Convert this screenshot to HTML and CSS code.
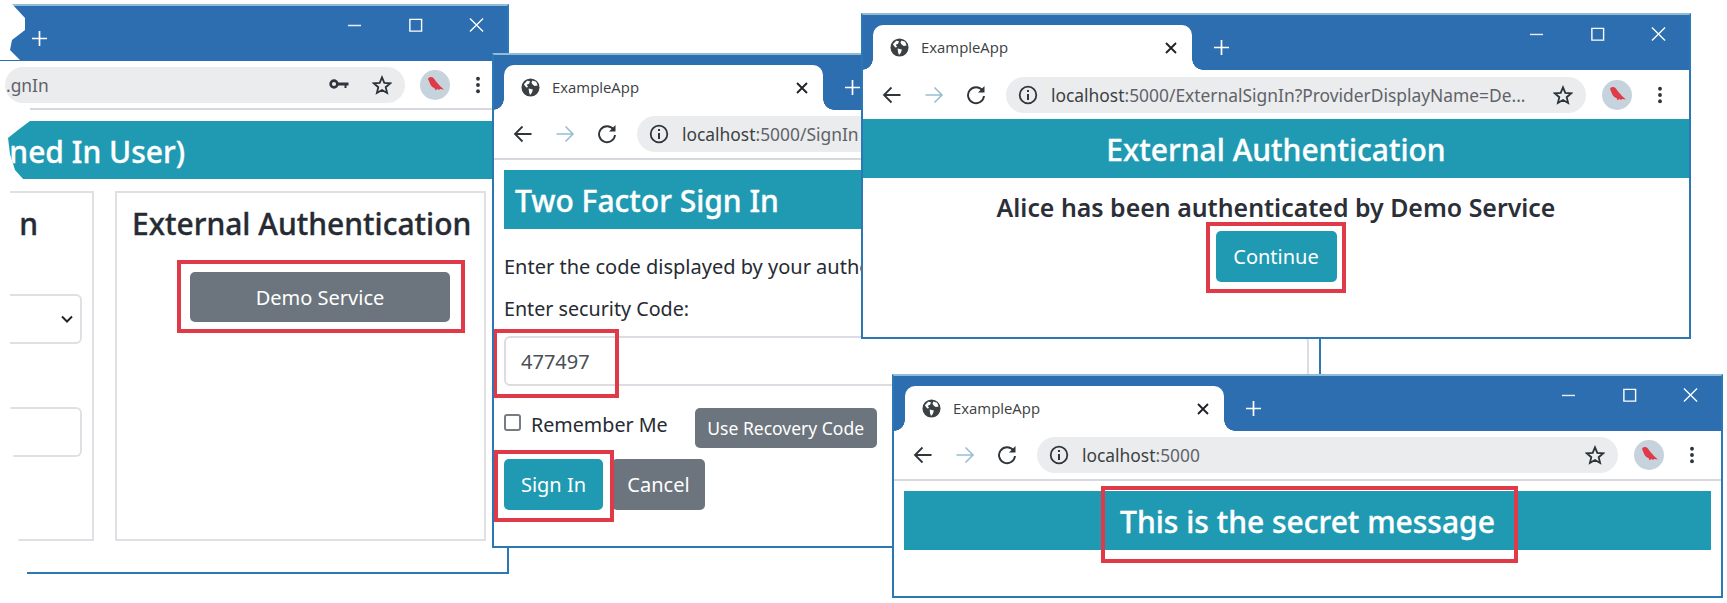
FILE: index.html
```html
<!DOCTYPE html>
<html lang="en">

<head>
    <meta charset="UTF-8" />
    <title>ExampleApp</title>
    <link rel="stylesheet" href="styles.css">
</head>

<body>
    <svg class="icons" width="0" height="0">
        <symbol id="i-globe" viewBox="0 0 20 20">
            <circle cx="10" cy="10" r="9.5" fill="#3c4043" />
            <path d="M3 6.5 6.5 3l3 .5-1 2.5-2.5 1 1.500 2.500-2 .5zM12 2.500l4 1.500 1.500 4-3 .5-2-1.500-1.500-2zM8 11l4.500 1-1 3.500-2 2.500-1-3z" fill="#fff" />
        </symbol>
        <symbol id="i-back" viewBox="0 0 20 20">
            <path d="M18.500 10H2M9.500 2.500 2 10l7.500 7.500" fill="none" stroke="currentColor" stroke-width="1.800" />
        </symbol>
        <symbol id="i-fwd" viewBox="0 0 20 20">
            <path d="M1.500 10H18M10.500 2.500 18 10l-7.500 7.500" fill="none" stroke="currentColor" stroke-width="1.600" />
        </symbol>
        <symbol id="i-reload" viewBox="0 0 20 20">
            <path d="M16.500 5.500A8 8 0 1 0 18 11" fill="none" stroke="currentColor" stroke-width="1.900" />
            <path d="M18.500 1v6.500H12z" fill="currentColor" />
        </symbol>
        <symbol id="i-info" viewBox="0 0 20 20">
            <circle cx="10" cy="10" r="8.300" fill="none" stroke="currentColor" stroke-width="1.800" />
            <path d="M9 9h2v6H9zM9 5h2v2H9z" fill="currentColor" />
        </symbol>
        <symbol id="i-star" viewBox="0 0 20 20">
            <path d="M10 2.300 12.300 7.800l6 .5-4.600 3.900 1.400 5.800L10 15l-5.100 3 1.400-5.800-4.600-3.900 6-.5z" fill="none" stroke="#2b3238" stroke-width="1.800" stroke-linejoin="miter" />
        </symbol>
        <symbol id="i-key" viewBox="0 0 20 20">
            <circle cx="5" cy="9" r="3.400" fill="none" stroke="#2f353b" stroke-width="2.600" />
            <path d="M8 7.500h11.500v3H17.500V13h-2v-2.500H8z" fill="#2f353b" />
        </symbol>
        <symbol id="i-bird" viewBox="0 0 30 30">
            <path d="M8 9c1-2.500 4-2.500 5.500-1l3 4 4 4.500 3.500 3-4-.5-1 1-1.500-1-2 1.200-1-2.200C10.500 17 10 13 8 9z" fill="#e03a49" />
        </symbol>
        <symbol id="i-dots" viewBox="0 0 24 24">
            <circle cx="12" cy="4.500" r="2.300" fill="#2f353b" />
            <circle cx="12" cy="12" r="2.300" fill="#2f353b" />
            <circle cx="12" cy="19.500" r="2.300" fill="#2f353b" />
        </symbol>
        <symbol id="i-plus" viewBox="0 0 18 18">
            <path d="M9 1v16M1 9h16" fill="none" stroke="#fff" stroke-width="1.800" />
        </symbol>
        <symbol id="i-min" viewBox="0 0 16 16">
            <path d="M1 8.500h14" fill="none" stroke="#e8eef5" stroke-width="1.500" />
        </symbol>
        <symbol id="i-max" viewBox="0 0 16 16">
            <path d="M2 2h12.500v12.500H2z" fill="none" stroke="#fff" stroke-width="1.500" />
        </symbol>
        <symbol id="i-close" viewBox="0 0 16 16">
            <path d="M1 1l14 14M15 1 1 15" fill="none" stroke="#fff" stroke-width="1.400" />
        </symbol>
        <symbol id="i-x" viewBox="0 0 12 12">
            <path d="M1 1l10 10M11 1 1 11" fill="none" stroke="#1f2327" stroke-width="1.900" />
        </symbol>
    </svg>

    <!-- janela rasgada da esquerda -->
    <div class="window win-torn">
        <div class="titlebar">
            <svg class="plus"><use href="#i-plus" /></svg>
            <div class="spacer"></div>
            <div class="controls">
                <svg><use href="#i-min" /></svg>
                <svg><use href="#i-max" /></svg>
                <svg><use href="#i-close" /></svg>
            </div>
        </div>
        <div class="toolbar toolbar-line torn-toolbar">
            <div class="pill torn-pill">
                <span class="url">.gnIn</span>
                <svg class="pill-key"><use href="#i-key" /></svg>
                <svg class="pill-star"><use href="#i-star" /></svg>
            </div>
            <svg class="avatar"><use href="#i-bird" /></svg>
            <svg class="dots"><use href="#i-dots" /></svg>
        </div>
        <div class="banner torn-banner"><h2>ned In User)</h2></div>
        <div class="cards">
            <div class="card card-left">
                <h3>n</h3>
                <div class="field field-select">
                    <svg class="chevron" viewBox="0 0 12 8"><path d="M1 1.500 6 6.500l5-5" fill="none" stroke="#212529" stroke-width="2" /></svg>
                </div>
                <div class="field field-text"></div>
            </div>
            <div class="card card-right">
                <h3>External Authentication</h3>
                <button class="btn btn-gray btn-demo">Demo Service</button>
            </div>
        </div>
        <div class="mark mark-demo"></div>
    </div>

    <!-- dois fatores -->
    <div class="window win-two">
        <div class="titlebar">
            <div class="tab">
                <svg class="globe"><use href="#i-globe" /></svg>
                <span class="tab-title">ExampleApp</span>
                <svg class="tab-x"><use href="#i-x" /></svg>
            </div>
            <svg class="plus"><use href="#i-plus" /></svg>
        </div>
        <div class="toolbar toolbar-line">
            <svg class="nav"><use href="#i-back" /></svg>
            <svg class="nav nav-off"><use href="#i-fwd" /></svg>
            <svg class="nav"><use href="#i-reload" /></svg>
            <div class="pill">
                <svg class="info"><use href="#i-info" /></svg>
                <span class="url"><b>localhost</b>:5000/SignIn</span>
            </div>
        </div>
        <div class="content">
            <div class="banner banner-left"><h2>Two Factor Sign In</h2></div>
            <p class="line first-line">Enter the code displayed by your authenticator app</p>
            <p class="line label-line">Enter security Code:</p>
            <div class="code-input">477497</div>
            <div class="remember-row">
                <span class="checkbox"></span>
                <span class="line remember-text">Remember Me</span>
                <button class="btn btn-gray btn-recovery">Use Recovery Code</button>
            </div>
            <div class="button-row">
                <button class="btn btn-teal btn-signin">Sign In</button>
                <button class="btn btn-gray btn-cancel">Cancel</button>
            </div>
        </div>
        <div class="mark mark-code"></div>
        <div class="mark mark-signin"></div>
    </div>

    <!-- autenticacao externa -->
    <div class="window win-external">
        <div class="titlebar">
            <div class="tab">
                <svg class="globe"><use href="#i-globe" /></svg>
                <span class="tab-title">ExampleApp</span>
                <svg class="tab-x"><use href="#i-x" /></svg>
            </div>
            <svg class="plus"><use href="#i-plus" /></svg>
            <div class="spacer"></div>
            <div class="controls">
                <svg><use href="#i-min" /></svg>
                <svg><use href="#i-max" /></svg>
                <svg><use href="#i-close" /></svg>
            </div>
        </div>
        <div class="toolbar">
            <svg class="nav"><use href="#i-back" /></svg>
            <svg class="nav nav-off"><use href="#i-fwd" /></svg>
            <svg class="nav"><use href="#i-reload" /></svg>
            <div class="pill">
                <svg class="info"><use href="#i-info" /></svg>
                <span class="url"><b>localhost</b>:5000/ExternalSignIn?ProviderDisplayName=De...</span>
                <svg class="pill-star"><use href="#i-star" /></svg>
            </div>
            <svg class="avatar"><use href="#i-bird" /></svg>
            <svg class="dots"><use href="#i-dots" /></svg>
        </div>
        <div class="banner"><h2>External Authentication</h2></div>
        <h4 class="auth-text">Alice has been authenticated by Demo Service</h4>
        <div class="center-row"><button class="btn btn-teal btn-continue">Continue</button></div>
        <div class="mark mark-continue"></div>
    </div>

    <!-- mensagem secreta -->
    <div class="window win-secret">
        <div class="titlebar">
            <div class="tab">
                <svg class="globe"><use href="#i-globe" /></svg>
                <span class="tab-title">ExampleApp</span>
                <svg class="tab-x"><use href="#i-x" /></svg>
            </div>
            <svg class="plus"><use href="#i-plus" /></svg>
            <div class="spacer"></div>
            <div class="controls">
                <svg><use href="#i-min" /></svg>
                <svg><use href="#i-max" /></svg>
                <svg><use href="#i-close" /></svg>
            </div>
        </div>
        <div class="toolbar toolbar-line">
            <svg class="nav"><use href="#i-back" /></svg>
            <svg class="nav nav-off"><use href="#i-fwd" /></svg>
            <svg class="nav"><use href="#i-reload" /></svg>
            <div class="pill">
                <svg class="info"><use href="#i-info" /></svg>
                <span class="url"><b>localhost</b>:5000</span>
                <svg class="pill-star"><use href="#i-star" /></svg>
            </div>
            <svg class="avatar"><use href="#i-bird" /></svg>
            <svg class="dots"><use href="#i-dots" /></svg>
        </div>
        <div class="content">
            <div class="banner"><h2>This is the secret message</h2></div>
        </div>
        <div class="mark mark-secret"></div>
    </div>
</body>

</html>
```

FILE: styles.css
```css
* {
    box-sizing: border-box;
}

body {
    margin: 0;
    width: 1727px;
    height: 603px;
    overflow: hidden;
    position: relative;
    background: #fff;
    font-family: "Noto Sans", "Open Sans", sans-serif;
    color: #262b33;
}

.icons {
    position: absolute;
}

.window {
    position: absolute;
    background: #fff;
    border: 2px solid #2b78b4;
    border-top-color: #8fbdd3;
    overflow: hidden;
}

.win-torn {
    left: 0;
    top: 4px;
    width: 509px;
    height: 570px;
    z-index: 1;
    border-left: none;
    clip-path: polygon(12px 0, 100% 0, 100% 100%, 27px 100%, 27px 545px, 19px 545px, 10px 400px, 10px 176px, 24px 176px, 15px 166px, 10px 150px, 8px 134px, 18px 126px, 30px 117px, 30px 104px, 0 104px, 0 56px, 20px 56px, 10px 46px, 12px 36px, 25px 26px, 25px 14px);
}

.win-two {
    left: 492px;
    top: 53px;
    width: 829px;
    height: 495px;
    z-index: 2;
}

.win-external {
    left: 861px;
    top: 13px;
    width: 830px;
    height: 326px;
    z-index: 3;
}

.win-secret {
    left: 892px;
    top: 374px;
    width: 831px;
    height: 224px;
    z-index: 4;
}

.titlebar {
    display: flex;
    height: 55px;
    background: #2d6eb0;
}

.win-torn .titlebar {
    padding-left: 10px;
}

.tab {
    position: relative;
    display: flex;
    align-items: center;
    align-self: flex-end;
    width: 319px;
    height: 45px;
    margin-left: 10px;
    padding: 0 15px 0 17px;
    background: #fff;
    border-radius: 10px 10px 0 0;
}

.win-secret .tab {
    margin-left: 11px;
}

.tab::before,
.tab::after {
    content: "";
    position: absolute;
    bottom: 0;
    width: 11px;
    height: 11px;
}

.tab::before {
    left: -11px;
    background: radial-gradient(circle at 0 0, #2d6eb0 10.500px, #fff 11px);
}

.tab::after {
    right: -11px;
    background: radial-gradient(circle at 100% 0, #2d6eb0 10.500px, #fff 11px);
}

.globe {
    width: 19px;
    height: 19px;
    flex: none;
}

.tab-title {
    flex: 1;
    margin-left: 12px;
    padding-bottom: 2px;
    font-size: 14.900px;
    color: #3c4043;
    font-family: "Open Sans", sans-serif;
}

.tab-x {
    width: 12px;
    height: 12px;
}

.plus {
    width: 17px;
    height: 17px;
    align-self: flex-end;
    margin: 0 0 14px 21px;
    flex: none;
}

.spacer {
    flex: 1;
}

.controls {
    display: flex;
    height: 38px;
}

.controls svg {
    width: 61px;
    height: 38px;
    padding: 11px 23px;
}

.toolbar {
    display: flex;
    align-items: center;
    height: 50px;
    padding: 0 17px 0 17px;
    background: #fff;
}

.win-external .toolbar,
.win-torn .toolbar {
    height: 49px;
}

.toolbar-line {
    border-bottom: 2px solid #d6d8de;
}

.nav {
    width: 24px;
    height: 24px;
    padding: 2px;
    margin-right: 18px;
    color: #2f353b;
    flex: none;
}

.nav-off {
    color: #97bfd2;
}

.pill {
    flex: 1;
    min-width: 0;
    display: flex;
    align-items: center;
    height: 36px;
    padding: 0 13px 0 12px;
    background: #ebecee;
    border-radius: 18px;
    overflow: hidden;
}

.info {
    width: 20px;
    height: 20px;
    margin-right: 13px;
    color: #2f353b;
    flex: none;
}

.url {
    flex: 1;
    font-size: 17.400px;
    color: #5f6368;
    white-space: nowrap;
}

.url b {
    font-weight: 400;
    color: #3c4043;
}

.pill-star {
    width: 20px;
    height: 20px;
    flex: none;
}

.pill-key {
    width: 20px;
    height: 20px;
    margin-right: 23px;
    flex: none;
}

.avatar {
    width: 30px;
    height: 30px;
    margin-left: 16px;
    border-radius: 50%;
    background: #c6d3dc;
    flex: none;
}

.dots {
    width: 24px;
    height: 24px;
    padding: 2px;
    margin-left: 16px;
    flex: none;
}

.torn-toolbar {
    padding: 0 17px 0 5px;
}

.torn-pill {
    flex: none;
    width: 400px;
    padding: 0 13px 0 1px;
}

.torn-pill + .avatar {
    margin-left: 15px;
}

.banner {
    display: flex;
    align-items: center;
    justify-content: center;
    height: 59px;
    padding-top: 2px;
    background: #1f9ab2;
    color: #fff;
}

.banner h2 {
    margin: 0;
    font-size: 30px;
    font-weight: 500;
    -webkit-text-stroke: 0.35px currentColor;
    white-space: nowrap;
}

.banner-left {
    justify-content: flex-start;
    padding-left: 11px;
}

.torn-banner {
    justify-content: flex-end;
    height: 58px;
    margin-top: 11px;
    padding-right: 322px;
}

.cards {
    display: flex;
    justify-content: flex-end;
    gap: 21px;
    margin-top: 12px;
    padding-right: 21px;
}

.card {
    height: 350px;
    border: 2px solid #dfe0e4;
    flex: none;
}

.card h3 {
    margin: 0;
    font-size: 30px;
    font-weight: 500;
    -webkit-text-stroke: 0.35px currentColor;
    line-height: 40px;
    white-space: nowrap;
}

.card-left {
    width: 86px;
    display: flex;
    flex-direction: column;
    align-items: flex-end;
    padding-top: 11px;
    border-left: none;
}

.card-left h3 {
    margin-right: 54px;
}

.field {
    height: 50px;
    border: 2px solid #dfe0e4;
    border-left: none;
    border-radius: 0 6px 6px 0;
    flex: none;
}

.card-left .field {
    width: 74px;
    margin-right: 10px;
}

.field-select {
    display: flex;
    align-items: center;
    justify-content: flex-end;
    margin-top: 50px;
    padding-right: 7px;
}

.field-text {
    margin-top: 63px;
}

.chevron {
    width: 12px;
    height: 8px;
}

.card-right {
    width: 371px;
    padding: 11px 0 0 15px;
}

.btn {
    display: block;
    border: none;
    border-radius: 5px;
    color: #fff;
    font-family: inherit;
    font-size: 20px;
    padding: 0;
}

.btn-gray {
    background: #6c757d;
}

.btn-teal {
    background: #1f9ab2;
}

.btn-demo {
    width: 260px;
    height: 50px;
    margin: 28px 0 0 58px;
}

.content {
    padding: 10px 10px 0;
}

.line {
    margin: 0;
    font-size: 19.700px;
    line-height: 26px;
    white-space: nowrap;
}

.first-line {
    margin-top: 25px;
    font-size: 20px;
}

.label-line {
    margin-top: 16px;
}

.code-input {
    display: flex;
    align-items: center;
    height: 50px;
    margin-top: 14px;
    padding-left: 15px;
    border: 2px solid #dcdde2;
    border-radius: 6px;
    font-size: 20px;
    color: #495057;
}

.remember-row {
    display: flex;
    align-items: center;
    height: 40px;
    margin-top: 22px;
}

.checkbox {
    width: 17px;
    height: 17px;
    margin: -12px 10px 0 0;
    border: 2px solid #767c84;
    border-radius: 3px;
}

.remember-text {
    margin-bottom: 6px;
}

.btn-recovery {
    width: 182px;
    height: 40px;
    margin-left: 27px;
    font-size: 17.500px;
}

.button-row {
    display: flex;
    gap: 9px;
    margin-top: 11px;
}

.btn-signin {
    width: 99px;
    height: 51px;
}

.btn-cancel {
    width: 93px;
    height: 51px;
}

.auth-text {
    margin: 14px 0 0;
    font-size: 24.900px;
    font-weight: 600;
    line-height: 30px;
    text-align: center;
    color: #2b2f38;
}

.center-row {
    display: flex;
    justify-content: center;
    margin-top: 9px;
}

.btn-continue {
    width: 121px;
    height: 51px;
}

/* caixas vermelhas por cima do conteudo */
.mark {
    position: absolute;
    border: 4px solid #e03a49;
}

.mark-demo {
    left: 177px;
    top: 254px;
    width: 288px;
    height: 73px;
}

.mark-code {
    left: -1px;
    top: 274px;
    width: 126px;
    height: 69px;
}

.mark-signin {
    left: 0;
    top: 395px;
    width: 120px;
    height: 72px;
}

.mark-continue {
    left: 343px;
    top: 207px;
    width: 140px;
    height: 71px;
}

.mark-secret {
    left: 207px;
    top: 110px;
    width: 417px;
    height: 77px;
}
```
